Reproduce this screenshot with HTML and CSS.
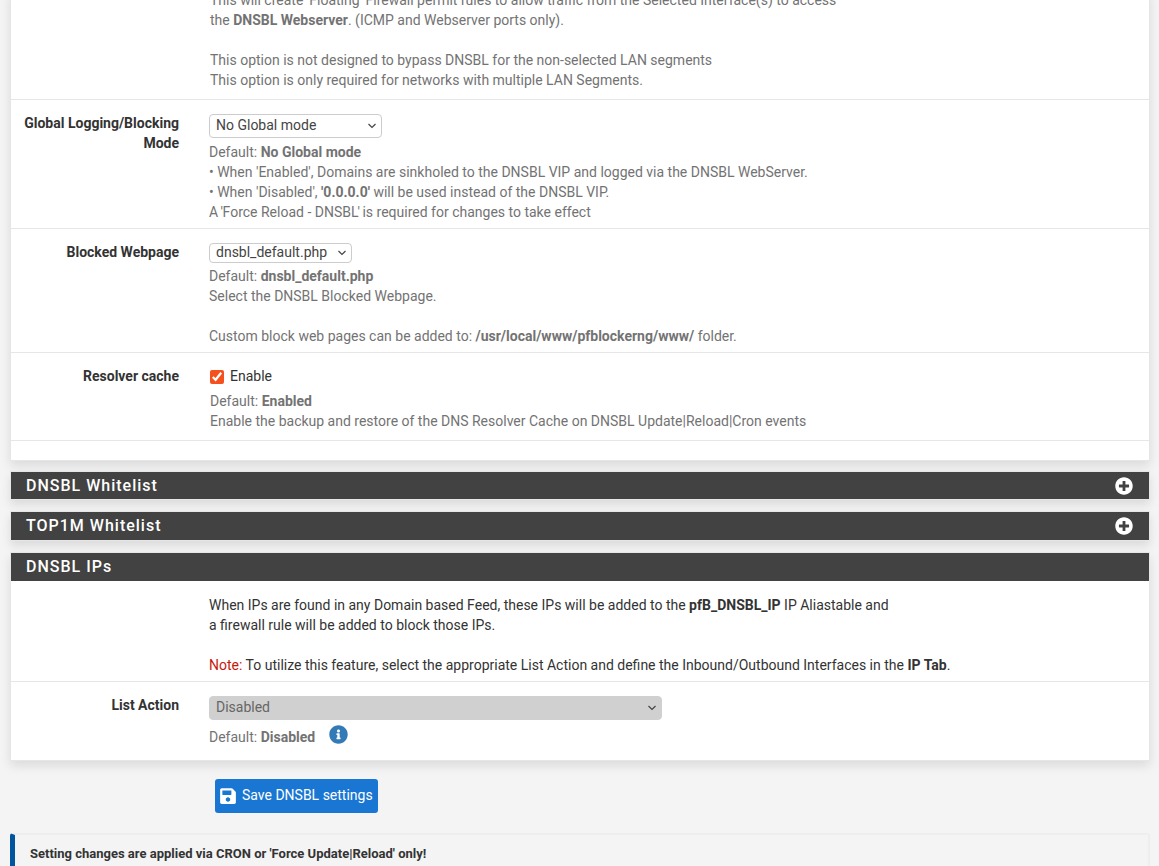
FILE: index.html
```html
<!DOCTYPE html>
<html lang="en">
<head>
    <meta charset="UTF-8">
    <meta name="viewport" content="width=device-width, initial-scale=1.0">
    <title>pfBlockerNG DNSBL</title>
    <link rel="stylesheet" href="styles.css">
</head>
<body>
    <div class="page">
        <div class="panel panel-top">
            <div class="form-row row-intro">
                <div class="row-label"></div>
                <div class="row-field field-shift">
                    <p class="help">This will create 'Floating' Firewall permit rules to allow traffic from the Selected Interface(s) to access<br>
                    the <b>DNSBL Webserver</b>. (ICMP and Webserver ports only).<br><br>
                    This option is not designed to bypass DNSBL for the non-selected LAN segments<br>
                    This option is only required for networks with multiple LAN Segments.</p>
                </div>
            </div>
            <div class="form-row row-mode">
                <div class="row-label">Global Logging/Blocking Mode</div>
                <div class="row-field">
                    <select class="select select-mode"><option>No Global mode</option></select>
                    <p class="help">Default: <b>No Global mode</b><br>
                    • When 'Enabled', Domains are sinkholed to the DNSBL VIP and logged via the DNSBL WebServer.<br>
                    • When 'Disabled', <b>'0.0.0.0'</b> will be used instead of the DNSBL VIP.<br>
                    <span class="tight-half">A '</span>Force Reload - DNSB<span class="tight">L'</span> is required for changes to take effect</p>
                </div>
            </div>
            <div class="form-row row-webpage">
                <div class="row-label">Blocked Webpage</div>
                <div class="row-field">
                    <select class="select select-page"><option>dnsbl_default.php</option></select>
                    <p class="help">Default: <b>dnsbl_default.php</b><br>
                    Select the DNSBL Blocked Webpage.<br><br>
                    Custom block web pages can be added to: <b>/usr/local/www/pfblockerng/www/</b> folder.</p>
                </div>
            </div>
            <div class="form-row row-cache">
                <div class="row-label">Resolver cache</div>
                <div class="row-field field-shift">
                    <label class="check"><input type="checkbox" checked> Enable</label>
                    <p class="help">Default: <b>Enabled</b><br>
                    Enable the backup and restore of the DNS Resolver Cache on DNSBL Update|Reload|Cron events</p>
                </div>
            </div>
            <div class="row-empty"></div>
        </div>

        <div class="panel panel-closed">
            <h2 class="panel-title panel-title-short">DNSBL Whitelist
                <svg class="plus-icon" viewBox="0 0 512 512"><path fill="#fff" d="M256 8C119 8 8 119 8 256s111 248 248 248 248-111 248-248S393 8 256 8zm144 276c0 6.6-5.4 12-12 12h-92v92c0 6.6-5.4 12-12 12h-56c-6.6 0-12-5.4-12-12v-92h-92c-6.6 0-12-5.4-12-12v-56c0-6.6 5.4-12 12-12h92v-92c0-6.6 5.4-12 12-12h56c6.6 0 12 5.4 12 12v92h92c6.6 0 12 5.4 12 12v56z"/></svg>
            </h2>
        </div>
        <div class="panel panel-closed">
            <h2 class="panel-title">TOP1M Whitelist
                <svg class="plus-icon" viewBox="0 0 512 512"><path fill="#fff" d="M256 8C119 8 8 119 8 256s111 248 248 248 248-111 248-248S393 8 256 8zm144 276c0 6.6-5.4 12-12 12h-92v92c0 6.6-5.4 12-12 12h-56c-6.6 0-12-5.4-12-12v-92h-92c-6.6 0-12-5.4-12-12v-56c0-6.6 5.4-12 12-12h92v-92c0-6.6 5.4-12 12-12h56c6.6 0 12 5.4 12 12v92h92c6.6 0 12 5.4 12 12v56z"/></svg>
            </h2>
        </div>
        <div class="panel">
            <h2 class="panel-title">DNSBL IPs</h2>
            <div class="form-row row-ips">
                <div class="row-label"></div>
                <div class="row-field">
                    <p class="help help-dark">When IPs are found in any Domain based Feed, these IPs will be added to the <b>pfB_DNSBL_IP</b> IP Aliastable and<br>
                    a firewall rule will be added to block those IPs.<br><br>
                    <span class="note">Note:</span> To utilize this feature, select the appropriate List Action and define the Inbound/Outbound Interfaces in the <b>IP Tab</b>.</p>
                </div>
            </div>
            <div class="form-row row-action">
                <div class="row-label">List Action</div>
                <div class="row-field">
                    <select class="select select-action"><option>Disabled</option></select>
                    <p class="help">Default: <b>Disabled</b>
                        <svg class="info-icon" viewBox="0 0 512 512"><path fill="#337ab7" d="M256 8C119.043 8 8 119.083 8 256c0 136.997 111.043 248 248 248s248-111.003 248-248C504 119.083 392.957 8 256 8zm0 110c23.196 0 42 18.804 42 42s-18.804 42-42 42-42-18.804-42-42 18.804-42 42-42zm56 254c0 6.627-5.373 12-12 12h-88c-6.627 0-12-5.373-12-12v-24c0-6.627 5.373-12 12-12h12v-64h-12c-6.627 0-12-5.373-12-12v-24c0-6.627 5.373-12 12-12h64c6.627 0 12 5.373 12 12v100h12c6.627 0 12 5.373 12 12v24z"/></svg>
                    </p>
                </div>
            </div>
        </div>

        <div class="save-row">
            <button class="save-button">
                <svg class="save-icon" viewBox="0 0 448 512"><path fill="#fff" d="M433.941 129.941l-83.882-83.882A48 48 0 0 0 316.118 32H48C21.49 32 0 53.49 0 80v352c0 26.51 21.49 48 48 48h352c26.51 0 48-21.49 48-48V163.882a48 48 0 0 0-14.059-33.941zM224 416c-35.346 0-64-28.654-64-64 0-35.346 28.654-64 64-64s64 28.654 64 64c0 35.346-28.654 64-64 64zm96-304.52V212c0 6.627-5.373 12-12 12H76c-6.627 0-12-5.373-12-12V108c0-6.627 5.373-12 12-12h228.52c3.183 0 6.235 1.264 8.485 3.515l3.48 3.48A11.996 11.996 0 0 1 320 111.48z"/></svg>
                <span class="save-text">Save DNSBL settings</span>
            </button>
        </div>

        <div class="notice">Setting changes are applied via CRON or 'Force Update|Reload' only!</div>
    </div>
</body>
</html>
```

FILE: styles.css
```css
html, body {
    margin: 0;
    height: 866px;
    overflow: hidden;
}

body {
    font-family: 'Roboto', sans-serif;
    font-size: 14px;
    line-height: 20px;
    color: #333;
    background-color: #f4f4f4;
}

/* page is scrolled, first line sits half out of the window */
.page {
    margin-top: -10px;
    padding: 0 9px 0 10px;
}

.panel {
    background-color: white;
    border: 1px solid #e6e6e6;
    box-shadow: 0 5px 10px rgba(0, 0, 0, 0.1);
    margin-bottom: 11px;
}

.panel-top {
    border-top: none;
    margin-bottom: 10px;
}

.panel-title {
    display: flex;
    justify-content: space-between;
    align-items: center;
    height: 28px;
    margin: 0;
    padding: 0 15px;
    background-color: #424242;
    color: white;
    font-size: 16px;
    font-weight: 500;
    letter-spacing: 1px;
}

.panel-title-short {
    height: 27px;
}

.plus-icon {
    width: 18px;
    height: 18px;
    margin-right: 1px;
}

.form-row {
    display: grid;
    grid-template-columns: 168px 1fr;
    column-gap: 30px;
    border-bottom: 1px solid #e6e6e6;
}

.row-label {
    font-weight: 700;
    text-align: right;
    color: #333;
}

.help {
    margin: 0;
    color: #737373;
}

.help b {
    font-weight: 700;
}

.help-dark {
    color: #333;
}

.note {
    color: #c7190b;
}

.tight {
    letter-spacing: -1px;
}

.tight-half {
    letter-spacing: -0.5px;
}

.select {
    display: block;
    height: 24px;
    padding: 0 20px 2px 6px;
    font-family: 'Roboto', sans-serif;
    font-size: 14px;
    color: #444;
    background: white url("data:image/svg+xml,%3Csvg xmlns='http://www.w3.org/2000/svg' width='10' height='6'%3E%3Cpath d='M1.5 1l3.5 3.5 3.5-3.5' fill='none' stroke='%23444' stroke-width='1.2'/%3E%3C/svg%3E") no-repeat right 4px center;
    border: 1px solid #ccc;
    border-radius: 4px;
    appearance: none;
}

.select-mode {
    width: 173px;
    margin-bottom: 4px;
}

.select-page {
    width: 143px;
    height: 20px;
    margin-bottom: 3px;
}

.select-action {
    width: 453px;
    background-color: #d0d0d0;
    border-color: #d0d0d0;
    color: #666;
    margin-bottom: 5px;
}

.row-intro {
    padding-bottom: 9px;
}

.row-mode {
    padding: 13px 0 6px;
}

.row-mode .row-field,
.row-webpage .row-field,
.row-action .row-field {
    padding-top: 1px;
}

.row-webpage {
    padding: 13px 0 6px;
}

.row-cache {
    padding: 13px 0 9px;
}

.field-shift {
    padding-left: 1px;
}

.check {
    display: flex;
    align-items: center;
    gap: 6px;
    margin-bottom: 5px;
}

.check input {
    width: 14px;
    height: 14px;
    margin: 2px 0 0;
    accent-color: #f4511e;
}

.row-empty {
    height: 19px;
}

.row-ips {
    padding: 14px 0 6px;
}

.row-action {
    padding: 13px 0 13px;
    border-bottom: none;
}

.info-icon {
    width: 19px;
    height: 19px;
    margin-left: 10px;
    vertical-align: -2px;
}

.save-row {
    padding: 7px 0 20px 205px;
}

.save-button {
    display: flex;
    align-items: center;
    gap: 6px;
    width: 163px;
    height: 34px;
    padding: 0 0 0 5px;
    background-color: #1976d2;
    color: white;
    font-family: 'Roboto', sans-serif;
    font-size: 14px;
    border: none;
    border-radius: 3px;
}

.save-text {
    margin-top: -2px;
}

.save-icon {
    width: 16px;
    height: 18px;
}

.notice {
    padding: 9px 15px 10px 15px;
    border: 2px solid #eee;
    border-left: 5px solid #00559e;
    border-radius: 3px;
    font-size: 13px;
    font-weight: 700;
    color: #333;
}
```
